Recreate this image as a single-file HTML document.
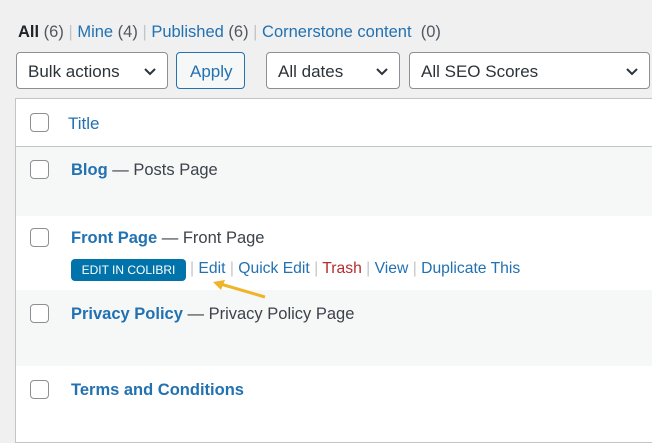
<!DOCTYPE html>
<html><head><style>
body{margin:0;width:652px;height:438px;overflow:hidden;background:#f0f0f1;font-family:"Liberation Sans",sans-serif;position:relative;color:#3c434a}
.a{position:absolute;white-space:nowrap}
.lnk{color:#2271b1}
.sel{position:absolute;top:52px;height:37px;box-sizing:border-box;border:1px solid #8c8f94;border-radius:4px;background:#fff;font-size:17px;color:#2c3338;line-height:38px;padding-left:11px}
.sel svg{position:absolute;right:10px;top:14px}
.cb{position:absolute;left:30px;width:19px;height:19px;box-sizing:border-box;border:1px solid #8c8f94;border-radius:4px;background:#fff}
.t{position:absolute;left:71px;font-size:16.5px;white-space:nowrap;color:#3c434a}
.t b{font-weight:600;color:#2271b1}
.sep{color:#c3c4c7}
</style></head><body>
<div class="a" style="left:18px;top:23px;font-size:16.5px;color:#50575e"><span style="color:#1d2327;font-weight:600">All</span> (6) <span class="sep">|</span> <span class="lnk">Mine</span> (4) <span class="sep">|</span> <span class="lnk">Published</span> (6) <span class="sep">|</span> <span class="lnk">Cornerstone content</span>&nbsp; (0)</div>
<div class="sel" style="left:16px;width:152px">Bulk actions<svg width="14" height="10"><path d="M2 2l5 5 5-5" stroke="#2c3338" stroke-width="2" fill="none"/></svg></div>
<div class="sel" style="left:176px;width:69px;border-color:#2271b1;color:#2271b1;background:#f6f7f7;padding-left:13px">Apply</div>
<div class="sel" style="left:266px;width:134px">All dates<svg width="14" height="10"><path d="M2 2l5 5 5-5" stroke="#2c3338" stroke-width="2" fill="none"/></svg></div>
<div class="sel" style="left:409px;width:241px">All SEO Scores<svg width="14" height="10"><path d="M2 2l5 5 5-5" stroke="#2c3338" stroke-width="2" fill="none"/></svg></div>
<div class="a" style="left:15px;top:98px;width:640px;height:345px;border:1px solid #c3c4c7;background:#fff;box-sizing:border-box"></div>
<div class="a" style="left:16px;top:146px;width:640px;height:1px;background:#c3c4c7"></div>
<div class="a" style="left:16px;top:147px;width:640px;height:69px;background:#f6f7f7"></div>
<div class="a" style="left:16px;top:290px;width:640px;height:76px;background:#f6f7f7"></div>
<div class="cb" style="top:113px"></div>
<div class="t" style="left:68px;top:114px;font-size:17px;color:#2271b1">Title</div>
<div class="cb" style="top:160px"></div>
<div class="t" style="top:161px"><b>Blog</b> — Posts Page</div>
<div class="cb" style="top:228px"></div>
<div class="t" style="top:229px"><b>Front Page</b> — Front Page</div>
<div class="a" style="left:71px;top:259px;width:115px;height:22px;background:#0073aa;border-radius:4px;color:#fff;font-size:12px;line-height:22px;text-align:center">EDIT IN COLIBRI</div>
<div class="a" style="left:190px;top:260px;font-size:15.7px;color:#2271b1"><span class="sep">|</span> Edit <span class="sep">|</span> Quick Edit <span class="sep">|</span> <span style="color:#b32d2e">Trash</span> <span class="sep">|</span> View <span class="sep">|</span> Duplicate This</div>
<svg class="a" style="left:205px;top:275px" width="70" height="30"><path d="M60 22L12 8" stroke="#f0b429" stroke-width="3"/><path d="M8 7l12-2-4 10z" fill="#f0b429"/></svg>
<div class="cb" style="top:304px"></div>
<div class="t" style="top:305px"><b>Privacy Policy</b> — Privacy Policy Page</div>
<div class="cb" style="top:380px"></div>
<div class="t" style="top:381px"><b>Terms and Conditions</b></div>
</body></html>
